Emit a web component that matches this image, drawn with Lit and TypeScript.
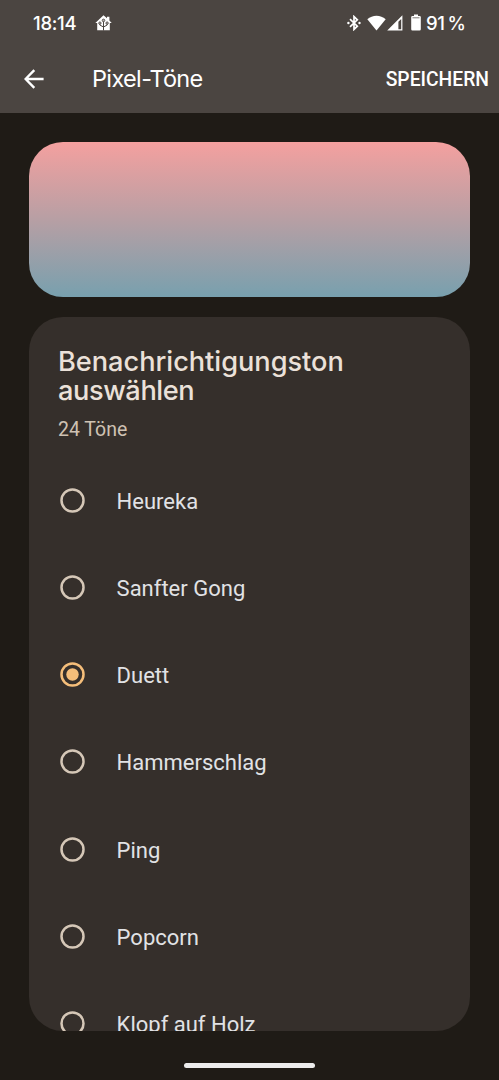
import { LitElement, html, css, svg } from "lit";
import { customElement, property } from "lit/decorators.js";

@customElement("sound-option")
class SoundOption extends LitElement {
  @property() label = "";
  @property({ type: Boolean }) selected = false;

  static styles = css`
    :host { display: block; flex: none; height: 87.3px; }
    .row { display: flex; align-items: center; height: 100%; }
    .radio { flex: none; display: block; margin-left: 31px; color: #d5c7b7; }
    .radio.on { color: #f5be7a; }
    .label {
      margin-left: 31.6px; padding-top: 3px; white-space: nowrap;
      font: 400 22px/26px Roboto, sans-serif; color: #e1e2e5;
    }
  `;

  render() {
    return html`<div class="row">
      <svg class="radio ${this.selected ? "on" : ""}" width="25" height="25" viewBox="0 0 25 25">
        <circle cx="12.5" cy="12.5" r="11" fill="none" stroke="currentColor" stroke-width="2.5"/>
        ${this.selected ? svg`<circle cx="12.5" cy="12.5" r="6.2" fill="currentColor"/>` : ""}
      </svg>
      <div class="label">${this.label}</div>
    </div>`;
  }
}

@customElement("app-root")
class AppRoot extends LitElement {
  private sounds = ["Heureka", "Sanfter Gong", "Duett", "Hammerschlag", "Ping", "Popcorn", "Klopf auf Holz"];

  static styles = css`
    :host {
      display: flex; flex-direction: column; box-sizing: border-box;
      width: 499px; height: 1080px; overflow: hidden;
      background: #1f1b16; color: #fff; font-family: Roboto, sans-serif;
    }
    svg { display: block; flex: none; }
    .top { height: 113px; flex: none; background: #4b4541; }
    .status { display: flex; align-items: center; height: 45px; padding-left: 33px; }
    .time { width: 62px; font: 500 18.5px/22px Inter, sans-serif; letter-spacing: -0.3px; white-space: nowrap; }
    .system { display: flex; align-items: center; margin-left: 235px; }
    .wifi { margin-left: 6px; }
    .signal { margin-left: 1px; }
    .battery { margin-left: 8px; }
    .percent { margin-left: 5px; font: 500 18.5px/22px Inter, sans-serif; letter-spacing: -0.4px; word-spacing: -1.5px; white-space: nowrap; }
    .bar { display: flex; align-items: center; height: 68px; padding: 0 10px 0 24px; }
    .title { margin-left: 48px; font: 400 23.5px/30px Inter, sans-serif; letter-spacing: -0.65px; white-space: nowrap; }
    .save { margin-left: auto; padding-top: 2px; font: 500 19.3px/24px Roboto, sans-serif; white-space: nowrap; }
    .preview {
      flex: none; height: 155px; margin: 29px 29px 0; border-radius: 34px;
      background: linear-gradient(#f4a09f, #b79fa4 50%, #78a0ae);
    }
    .card {
      display: flex; flex-direction: column; flex: none; box-sizing: border-box;
      height: 714px; margin: 20px 29px 0; padding-top: 30px; overflow: hidden;
      border-radius: 34px; background: #352f2b;
    }
    .heading {
      margin: 0 0 0 29px; font: 500 27.2px/29px Inter, sans-serif;
      color: #ebe1d9; white-space: nowrap;
    }
    .line { display: block; letter-spacing: -0.03px; }
    .line.tight { letter-spacing: -0.4px; }
    .count { margin: 13px 0 15.4px 29px; font-size: 19.5px; line-height: 23px; color: #cfc2b3; }
    .nav { display: flex; flex: 1; justify-content: center; padding-top: 32px; }
    .handle { width: 131px; height: 5px; border-radius: 3px; background: #ececec; }
  `;

  render() {
    return html`
      <div class="top">
        <div class="status">
          <div class="time">18:14</div>
          <svg width="17" height="16" viewBox="0 0 17 16">
            <path d="M8.5 .3 12 3.2V1.8h2.4v3.6L16.7 8h-1.9v7.3H2.2V8H.3z" fill="#fff"/>
            <path d="M8.5 15.5V5.5M8.5 12 4.8 10V8M8.5 12 12.2 10V8" fill="none" stroke="#4b4541" stroke-width="1"/>
            <g fill="#b5b2b0" stroke="#4b4541" stroke-width=".8"><circle cx="8.5" cy="5.4" r="1.3"/><circle cx="4.9" cy="8.1" r="1.2"/><circle cx="12.1" cy="8.1" r="1.2"/></g>
          </svg>
          <div class="system">
            <svg width="14" height="16" viewBox="0 0 14 16">
              <path d="M3 4.2 10.3 11.2 7 14.4V1.6L10.3 4.8 3 11.8" fill="none" stroke="#fff" stroke-width="1.7"/>
              <circle cx="1.4" cy="8" r="1.2" fill="#fff"/><circle cx="12.5" cy="8" r="1.2" fill="#fff"/>
            </svg>
            <svg class="wifi" width="19" height="16" viewBox="0 0 19 16">
              <path d="M.3 4.3C5.4-.4 13.6-.4 18.7 4.3L9.5 15.6z" fill="#fff"/>
            </svg>
            <svg class="signal" width="16" height="16" viewBox="0 0 16 16">
              <path fill-rule="evenodd" d="M15.4 .3V15.5H.2zM14.2 4 11.4 6.8V14.2H14.2z" fill="#fff"/>
            </svg>
            <svg class="battery" width="10" height="17" viewBox="0 0 10 17">
              <path d="M3 .5h4v1.4h1.6q1.2 0 1.2 1.2V15.2q0 1.2-1.2 1.2H1.4Q.2 16.4.2 15.2V3.1Q.2 1.9 1.4 1.9H3z" fill="#fff"/>
              <path d="M1.5 3.8h7" stroke="#4b4541" stroke-width=".7"/>
            </svg>
            <div class="percent">91 %</div>
          </div>
        </div>
        <div class="bar">
          <svg width="20" height="20" viewBox="0 0 20 20">
            <path d="M19.6 10H2M10.3 1.2 1.6 10l8.7 8.8" fill="none" stroke="#fff" stroke-width="2.4"/>
          </svg>
          <div class="title">Pixel-Töne</div>
          <div class="save">SPEICHERN</div>
        </div>
      </div>
      <div class="preview"></div>
      <div class="card">
        <h1 class="heading"><span class="line">Benachrichtigungston</span><span class="line tight">auswählen</span></h1>
        <div class="count">24 Töne</div>
        ${this.sounds.map((s) => html`<sound-option .label=${s} .selected=${s === "Duett"}></sound-option>`)}
      </div>
      <div class="nav"><div class="handle"></div></div>
    `;
  }
}
